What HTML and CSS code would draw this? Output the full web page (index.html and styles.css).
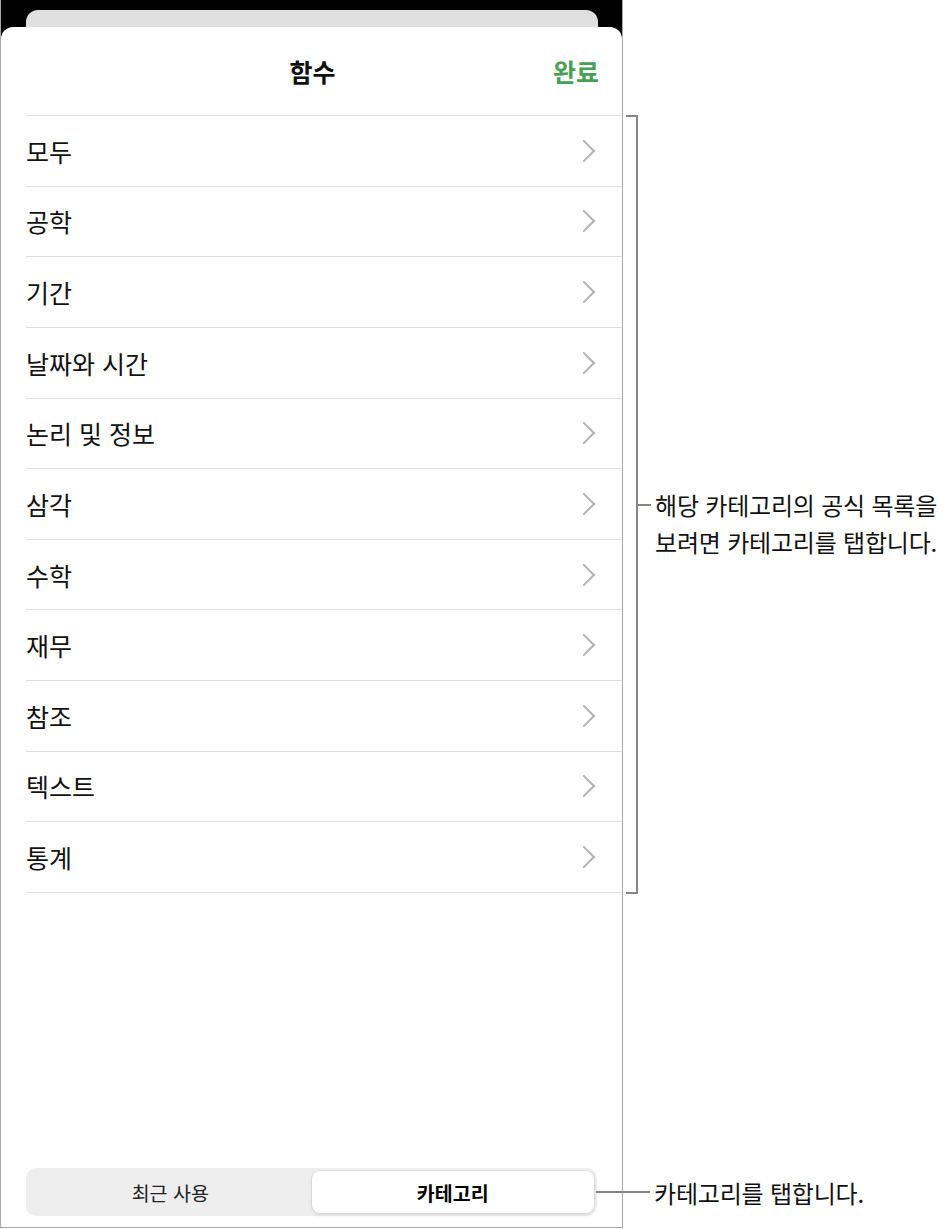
FILE: index.html
```html
<!DOCTYPE html>
<html lang="ko">

<head>
    <meta charset="UTF-8">
    <meta name="viewport" content="width=device-width, initial-scale=1.0">
    <title>함수</title>
    <link rel="stylesheet" href="styles.css">
</head>

<body>
    <div class="page">
        <div class="phone">
            <div class="back-card"></div>
            <div class="sheet">
                <div class="sheet-header">
                    <span></span>
                    <h1 class="title">함수</h1>
                    <span class="done">완료</span>
                </div>

                <ul class="category-list">
                    <li class="row"><span>모두</span><span class="chevron"></span></li>
                    <li class="row"><span>공학</span><span class="chevron"></span></li>
                    <li class="row"><span>기간</span><span class="chevron"></span></li>
                    <li class="row"><span>날짜와 시간</span><span class="chevron"></span></li>
                    <li class="row"><span>논리 및 정보</span><span class="chevron"></span></li>
                    <li class="row"><span>삼각</span><span class="chevron"></span></li>
                    <li class="row"><span>수학</span><span class="chevron"></span></li>
                    <li class="row"><span>재무</span><span class="chevron"></span></li>
                    <li class="row"><span>참조</span><span class="chevron"></span></li>
                    <li class="row"><span>텍스트</span><span class="chevron"></span></li>
                    <li class="row"><span>통계</span><span class="chevron"></span></li>
                </ul>

                <div class="segmented">
                    <div class="segment">최근 사용</div>
                    <div class="segment selected">카테고리</div>
                </div>
            </div>
        </div>

        <div class="notes">
            <div class="brace-group">
                <div class="brace"></div>
                <div class="tick"></div>
                <p class="note-text two-line">해당 카테고리의 공식 목록을<br>보려면 카테고리를 탭합니다.</p>
            </div>
            <div class="bottom-note">
                <div class="tick long"></div>
                <p class="note-text">카테고리를 탭합니다.</p>
            </div>
        </div>
    </div>
</body>

</html>
```

FILE: styles.css
```css
body {
    margin: 0;
    background: #fff;
    font-family: "Noto Sans CJK KR", "Noto Sans", sans-serif;
    color: #111;
}

.page {
    display: flex;
    width: 950px;
    height: 1229px;
}

/* device frame */
.phone {
    width: 623px;
    height: 1228px;
    box-sizing: border-box;
    border: 1px solid #a9a9a9;
    border-top: none;
    background: #000;
    display: flex;
    flex-direction: column;
    flex-shrink: 0;
    position: relative;
    z-index: 1;
}

.back-card {
    height: 17px;
    margin: 10px 24px 0 25px;
    background: #e0e0e0;
    border-radius: 12px 12px 0 0;
}

.sheet {
    flex: 1;
    background: #fff;
    border-radius: 12px 12px 0 0;
    display: flex;
    flex-direction: column;
}

.sheet-header {
    height: 88px;
    display: grid;
    grid-template-columns: 1fr auto 1fr;
    align-items: center;
    padding: 0 23px 0 25px;
}

.title {
    margin: 0;
    font-size: 25px;
    font-weight: bold;
}

.done {
    justify-self: end;
    font-size: 25px;
    font-weight: bold;
    color: #45a155;
}

.category-list {
    list-style: none;
    margin: 0 0 0 25px;
    padding: 0;
    border-bottom: 1px solid #dedede;
}

.row {
    height: 70.64px;
    box-sizing: border-box;
    border-top: 1px solid #dedede;
    display: flex;
    align-items: center;
    justify-content: space-between;
    padding-right: 28px;
    font-size: 25px;
}

.chevron {
    width: 14px;
    height: 14px;
    border-top: 2px solid #b2b2b2;
    border-right: 2px solid #b2b2b2;
    transform: rotate(45deg);
    margin-right: 2px;
}

.segmented {
    margin: auto 25px 11px 25px;
    height: 48px;
    box-sizing: border-box;
    padding: 3px;
    background: #eeeeef;
    border-radius: 10px;
    display: grid;
    grid-template-columns: 1fr 1fr;
}

.segment {
    display: flex;
    align-items: center;
    justify-content: center;
    font-size: 19.5px;
    color: #222;
}

.segment.selected {
    background: #fff;
    border-radius: 8px;
    font-weight: bold;
    color: #000;
    box-shadow: 0 0 0 1px rgba(0, 0, 0, 0.05), 0 2px 4px rgba(0, 0, 0, 0.08);
}

/* callouts */
.notes {
    flex: 1;
    display: flex;
    flex-direction: column;
    padding-top: 115px;
}

.brace-group {
    display: flex;
    align-items: center;
}

.brace {
    width: 10px;
    height: 775px;
    margin-left: 3px;
    border: 2px solid #858585;
    border-left: none;
}

.tick {
    width: 13px;
    height: 2px;
    background: #858585;
}

.tick.long {
    width: 54px;
    margin-left: -27px;
    position: relative;
    z-index: 2;
}

.note-text {
    margin: 0 0 0 4px;
    font-size: 24px;
    line-height: 37px;
    white-space: nowrap;
    letter-spacing: -0.2px;
}

.note-text.two-line {
    margin-top: 37px;
}

.bottom-note {
    margin-top: auto;
    margin-bottom: 13px;
    height: 48px;
    display: flex;
    align-items: center;
}
```
